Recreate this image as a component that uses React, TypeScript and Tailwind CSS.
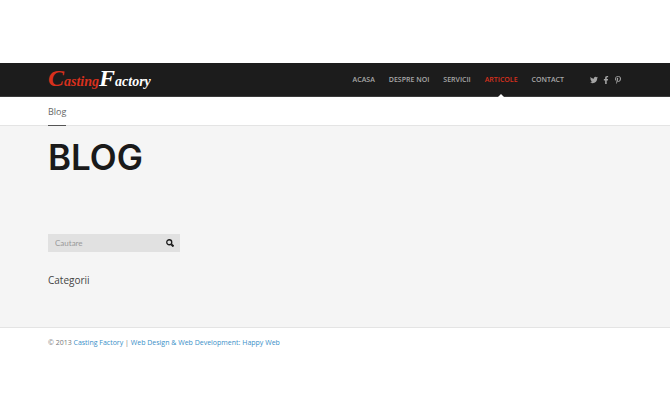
import { FaTwitter, FaFacebookF, FaPinterestP } from "react-icons/fa";

const menu = [
    { label: "ACASA", active: false },
    { label: "DESPRE NOI", active: false },
    { label: "SERVICII", active: false },
    { label: "ARTICOLE", active: true },
    { label: "CONTACT", active: false },
];

const social = [
    { label: "Twitter", icon: <FaTwitter /> },
    { label: "Facebook", icon: <FaFacebookF /> },
    { label: "Pinterest", icon: <FaPinterestP /> },
];

function Header() {
    return (
        <header className="flex h-[34px] items-center justify-between border-b border-[#3a3a3a] bg-[#1c1c1c] px-12">
            <a href="#" className="pt-px font-['Liberation_Serif',serif] text-[14px] leading-6 font-bold italic text-white">
                <span className="text-[#d8301c]">
                    <span className="text-[24px]">C</span>asting
                </span>
                <span className="text-[24px]">F</span>actory
            </a>
            <div className="flex h-full items-center gap-[26px]">
                <nav className="flex h-full gap-[14px]">
                    {menu.map((item) => (
                        <a
                            key={item.label}
                            href="#"
                            className={`relative flex h-full items-center pt-[2px] font-['Open_Sans',sans-serif] text-[7px] font-semibold whitespace-nowrap ${item.active ? "text-[#d8301c]" : "text-[#a8a8a8]"}`}
                        >
                            {item.label}
                            {item.active && (
                                <span className="absolute -bottom-px left-1/2 -translate-x-1/2 border-x-3 border-b-3 border-x-transparent border-b-white" />
                            )}
                        </a>
                    ))}
                </nav>
                <div className="flex gap-1 pt-px text-[8px] text-[#a4a4a4]">
                    {social.map((item) => (
                        <a key={item.label} href="#" aria-label={item.label} className="flex w-2 justify-center">
                            {item.icon}
                        </a>
                    ))}
                </div>
            </div>
        </header>
    );
}

function Search() {
    return (
        <form className="flex h-[18px] w-[132px] items-center bg-[#e1e1e1] pl-[7px] pr-[6px]">
            <input
                type="text"
                aria-label="Cautare"
                placeholder="Cautare"
                className="min-w-0 flex-1 bg-transparent text-[8px] leading-3 text-[#555] outline-none placeholder:text-[#999]"
            />
            <button type="submit" aria-label="Cauta">
                <svg viewBox="0 0 16 16" className="h-2 w-2" fill="none" stroke="#1c1c1c">
                    <circle cx="6.5" cy="6.5" r="5" strokeWidth="2.6" />
                    <path d="M10.5 10.5L15 15" strokeWidth="4" />
                </svg>
            </button>
        </form>
    );
}

function App() {
    return (
        <div className="bg-white pt-[63px] font-['Lato',sans-serif]">
            <Header />
            <div className="flex h-7 pl-12">
                <a href="#" className="z-10 -mb-px flex items-center border-b border-[#555] pt-px font-['Open_Sans',sans-serif] text-[9px] text-[#666]">
                    Blog
                </a>
            </div>
            <main className="border-y border-[#e4e4e4] bg-[#f5f5f5] px-12 pb-[39px]">
                <h1 className="pt-[10px] font-['Inter',sans-serif] text-[35px] leading-[42px] font-semibold text-[#1a1a1a]">BLOG</h1>
                <aside className="pt-[56px]">
                    <Search />
                    <h2 className="pt-5 font-['Open_Sans',sans-serif] text-[10px] leading-4 text-[#444]">Categorii</h2>
                </aside>
            </main>
            <footer className="px-12 pt-[9px] font-['Open_Sans',sans-serif] text-[7px] leading-3 text-[#777]">
                © 2013{" "}
                <a href="#" className="text-[#3a8fc8]">Casting Factory</a> |{" "}
                <a href="#" className="text-[#3a8fc8]">Web Design &amp; Web Development: Happy Web</a>
            </footer>
        </div>
    );
}

export default App;
